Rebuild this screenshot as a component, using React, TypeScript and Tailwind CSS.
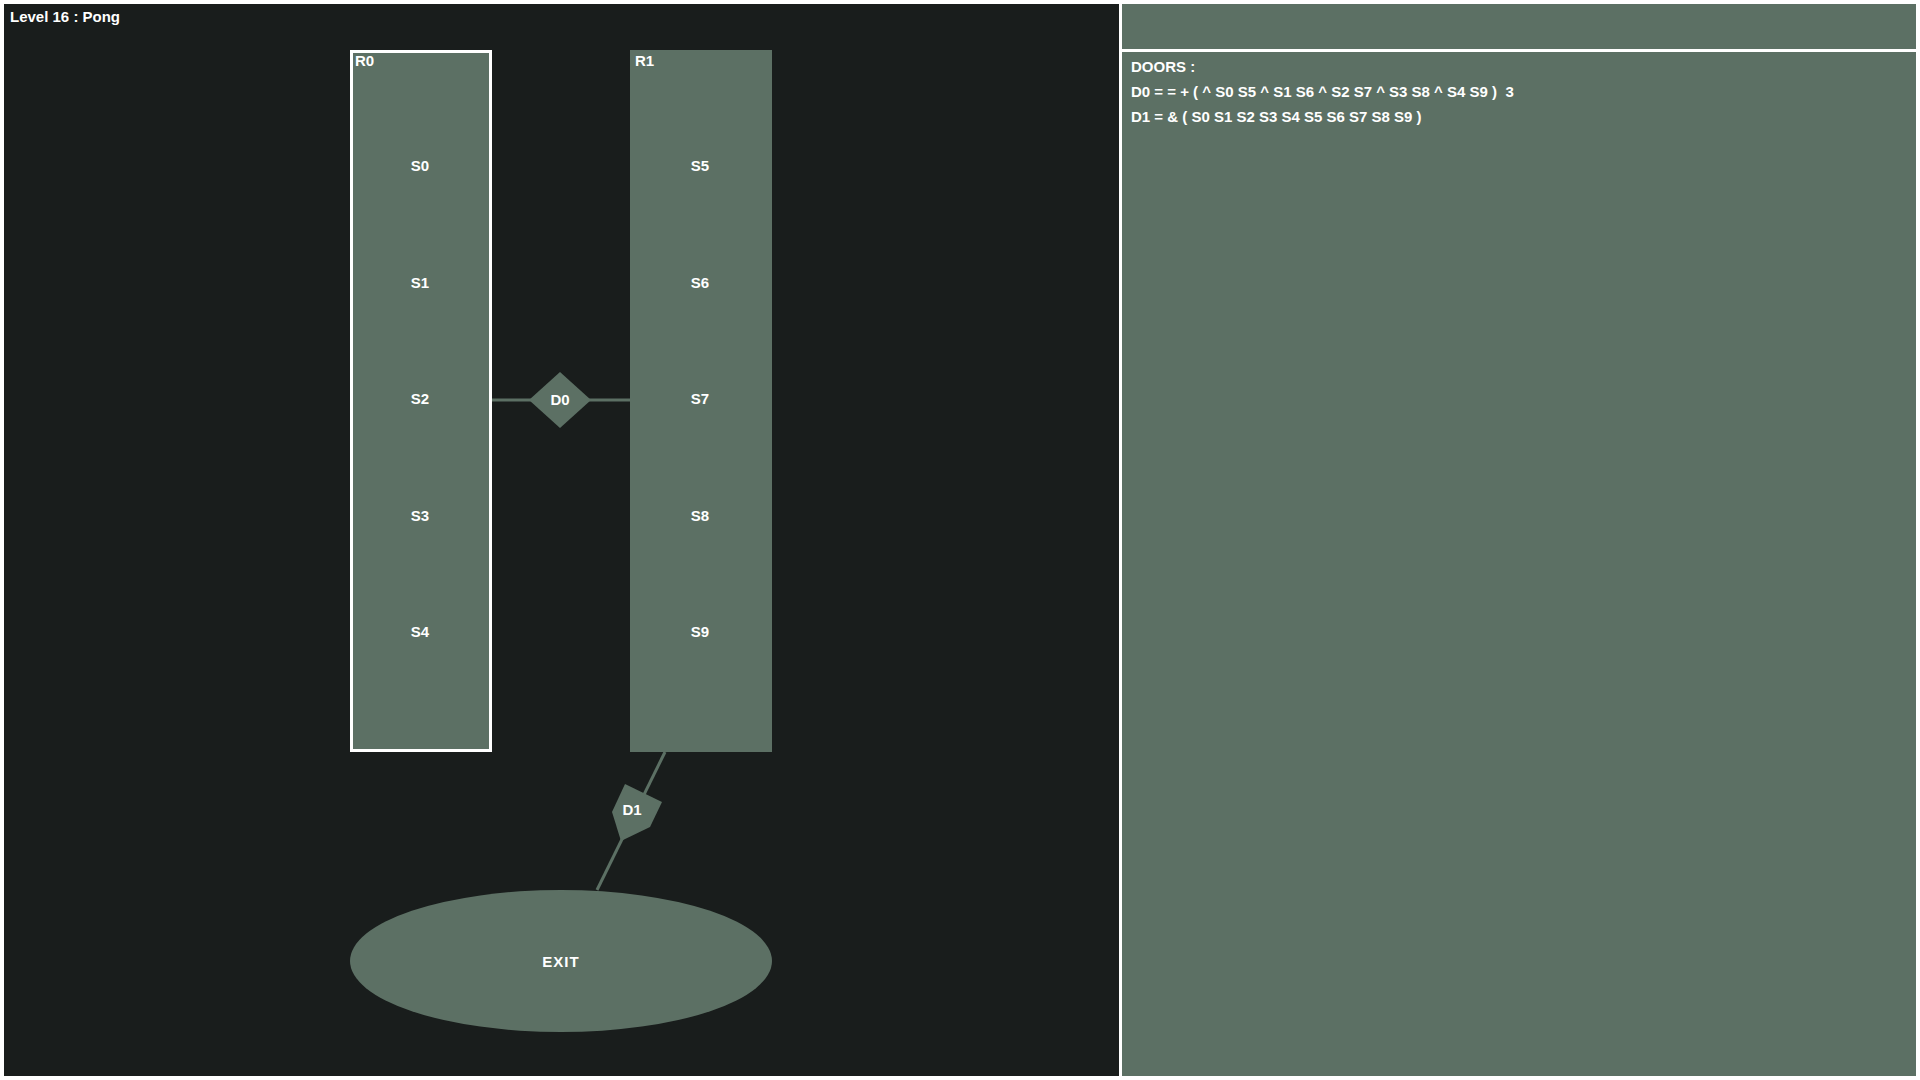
import React from "react";

const FONT = "font-['Liberation_Sans',Arial,sans-serif]";

interface RoomProps {
  name: string;
  slots: string[];
  selected?: boolean;
  className: string;
}

const Room = ({ name, slots, selected, className }: RoomProps) => (
  <div
    className={`absolute w-[142px] h-[702px] bg-[#5c7064] border-[3px] ${
      selected ? "border-white" : "border-[#5c7064]"
    } ${className}`}
  >
    {/* Room label */}
    <div className="absolute left-[2px] top-[-1px] text-[15px] leading-[17px] font-bold text-white">
      {name}
    </div>
    <div className="h-full flex flex-col items-center pr-[2px] pt-[104px] gap-[99.6px]">
      {slots.map((s) => (
        <div key={s} className="text-[15px] leading-[17px] font-bold text-white">
          {s}
        </div>
      ))}
    </div>
  </div>
);

const Label = ({ text, x, y }: { text: string; x: number; y: number }) => (
  <div
    className="absolute -translate-x-1/2 -translate-y-1/2 text-[15px] leading-[17px] font-bold text-white whitespace-nowrap"
    style={{ left: x, top: y }}
  >
    {text}
  </div>
);

const LevelCanvas = () => (
  <div className="relative w-[1115px] h-full bg-[#191d1c] overflow-hidden">
    <div className="absolute left-[6px] top-[4px] text-[15px] leading-[17px] font-bold text-white">
      Level 16 : Pong
    </div>

    {/* Connectors and door shapes */}
    <svg className="absolute inset-0" width="1115" height="1072">
      <line x1="488" y1="396" x2="626" y2="396" stroke="#5c7064" strokeWidth="3" />
      <line x1="661" y1="748" x2="593" y2="886" stroke="#5c7064" strokeWidth="3" />
      <polygon points="525,396 556,368 587,396 556,424" fill="#5c7064" />
      <polygon points="621,780 658,798 646,823 617,837 608,808" fill="#5c7064" />
    </svg>

    <Room name="R0" slots={["S0", "S1", "S2", "S3", "S4"]} selected className="left-[346px] top-[46px]" />
    <Room name="R1" slots={["S5", "S6", "S7", "S8", "S9"]} className="left-[626px] top-[46px]" />

    <Label text="D0" x={556} y={395} />
    <Label text="D1" x={628} y={805} />

    {/* Exit */}
    <div className="absolute left-[346px] top-[886px] w-[422px] h-[142px] rounded-[50%] bg-[#5c7064] flex items-center justify-center">
      <span className="text-[15px] leading-[17px] font-bold text-white tracking-[1px]">EXIT</span>
    </div>
  </div>
);

const DoorsPanel = () => (
  <div className="flex-1 flex flex-col gap-[3px]">
    <div className="h-[45px] bg-[#5c7064]" />
    <div className="flex-1 bg-[#5c7064] pl-[9px] pt-[2px] text-[15px] leading-[25px] font-bold text-white whitespace-pre">
      <div>DOORS :</div>
      <div>D0 = = + ( ^ S0 S5 ^ S1 S6 ^ S2 S7 ^ S3 S8 ^ S4 S9 )  3</div>
      <div>D1 = &amp; ( S0 S1 S2 S3 S4 S5 S6 S7 S8 S9 )</div>
    </div>
  </div>
);

export default function App() {
  return (
    <div className={`w-[1920px] h-[1080px] bg-white p-[4px] flex gap-[3px] ${FONT}`}>
      <LevelCanvas />
      <DoorsPanel />
    </div>
  );
}
